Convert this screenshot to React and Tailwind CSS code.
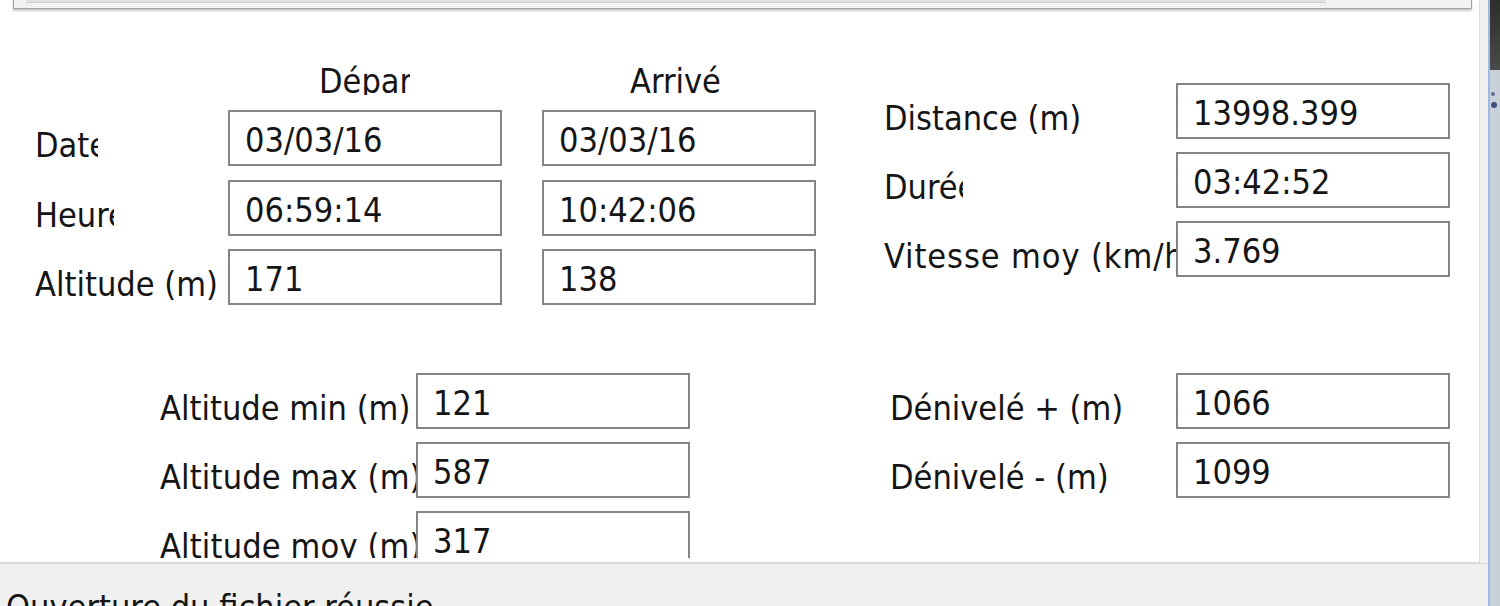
import React from 'react';

const font = "font-['DejaVu_Sans_Condensed','DejaVu_Sans',sans-serif] text-[34px] leading-[34px] text-[#151515]";

const Box = ({ value }) => (
  <div className="relative z-10 h-[56px] w-[274px] shrink-0 border-2 border-[#858585] bg-white pl-[15px] pt-[11px]">
    {value}
  </div>
);

const Label = ({ text, className }) => (
  <div className={`mt-[18px] h-[34px] shrink-0 whitespace-nowrap ${className}`}>{text}</div>
);

export const App = () => {
  return (
    <div className={`flex h-[606px] w-[1500px] overflow-hidden bg-[#f0f0f0] ${font}`}>
      <div className="flex w-[1488px] flex-col">
        <div className="w-[1480px] border-r border-b border-[#dcdcdc] bg-white">
          <div className="h-[558px] overflow-hidden">
            {/* top group, cut off by the scroll */}
            <div className="ml-[13px] h-[9px] w-[1459px] border-x border-b border-[#a3a3a3] bg-[#f2f2f2] shadow-[0_2px_2px_rgba(0,0,0,0.22)]">
              <div className="ml-[12px] h-[3px] w-[1300px] border-b border-[#cfcfcf] bg-[#e2e2e2]" />
            </div>

            <div className="mt-[55px] flex items-start">
              <div className="ml-[35px] flex flex-col">
                <div className="flex h-[31px]">
                  <div className="ml-[284px] w-[91px] overflow-hidden whitespace-nowrap">Départ</div>
                  <div className="ml-[220px] w-[92px] overflow-hidden whitespace-nowrap">Arrivée</div>
                </div>
                <div className="mt-[15px] flex h-[56px]">
                  <div className="w-[193px] shrink-0">
                    <Label text="Date" className="w-[63px] overflow-hidden" />
                  </div>
                  <Box value="03/03/16" />
                  <div className="ml-[40px]"><Box value="03/03/16" /></div>
                </div>
                <div className="mt-[14px] flex h-[56px]">
                  <div className="w-[193px] shrink-0">
                    <Label text="Heure" className="w-[79px] overflow-hidden" />
                  </div>
                  <Box value="06:59:14" />
                  <div className="ml-[40px]"><Box value="10:42:06" /></div>
                </div>
                <div className="mt-[13px] flex h-[56px]">
                  <div className="w-[193px] shrink-0">
                    <Label text="Altitude (m)" className="w-[193px]" />
                  </div>
                  <Box value="171" />
                  <div className="ml-[40px]"><Box value="138" /></div>
                </div>
              </div>

              <div className="ml-[68px] mt-[19px] flex flex-col gap-[13px]">
                <div className="flex h-[56px]">
                  <div className="w-[292px] shrink-0"><Label text="Distance (m)" className="" /></div>
                  <Box value="13998.399" />
                </div>
                <div className="flex h-[56px]">
                  <div className="w-[292px] shrink-0">
                    <Label text="Durée" className="w-[79px] overflow-hidden" />
                  </div>
                  <Box value="03:42:52" />
                </div>
                <div className="flex h-[56px]">
                  <div className="w-[292px] shrink-0"><Label text="Vitesse moy (km/h)" className="tracking-[0.9px]" /></div>
                  <Box value="3.769" />
                </div>
              </div>
            </div>

            <div className="mt-[68px] flex flex-col gap-[13px]">
              <div className="flex h-[56px]">
                <div className="ml-[160px] w-[256px] shrink-0"><Label text="Altitude min (m)" className="" /></div>
                <Box value="121" />
                <div className="ml-[200px] w-[286px] shrink-0"><Label text="Dénivelé + (m)" className="" /></div>
                <Box value="1066" />
              </div>
              <div className="flex h-[56px]">
                <div className="ml-[160px] w-[256px] shrink-0"><Label text="Altitude max (m)" className="tracking-[0.15px]" /></div>
                <Box value="587" />
                <div className="ml-[200px] w-[286px] shrink-0"><Label text="Dénivelé - (m)" className="" /></div>
                <Box value="1099" />
              </div>
              <div className="flex h-[56px]">
                <div className="ml-[160px] w-[256px] shrink-0"><Label text="Altitude moy (m)" className="tracking-[0.15px]" /></div>
                <Box value="317" />
              </div>
            </div>
          </div>
          <div className="h-[4px]" />
        </div>
        <div className="h-[8px] border-b border-[#d6d6d6] bg-[#e3e3e3]" />
        <div className="whitespace-nowrap pl-[6px] pt-[26px]">Ouverture du fichier réussie</div>
      </div>

      <div className="flex w-[12px] flex-col border-l-2 border-[#9cb8e4]">
        <div className="h-[70px] bg-gradient-to-b from-[#2e2e2e] to-[#4a4a4a]" />
        <div className="flex flex-1 flex-col bg-[#c9d0db] pt-[22px]">
          <div className="ml-[1px] h-[4px] w-[4px] rounded-full bg-[#5b6f9a]" />
          <div className="ml-[1px] mt-[6px] h-[6px] w-[6px] rounded-full bg-[#3d4f7c]" />
        </div>
      </div>
    </div>
  );
};

export default App;
